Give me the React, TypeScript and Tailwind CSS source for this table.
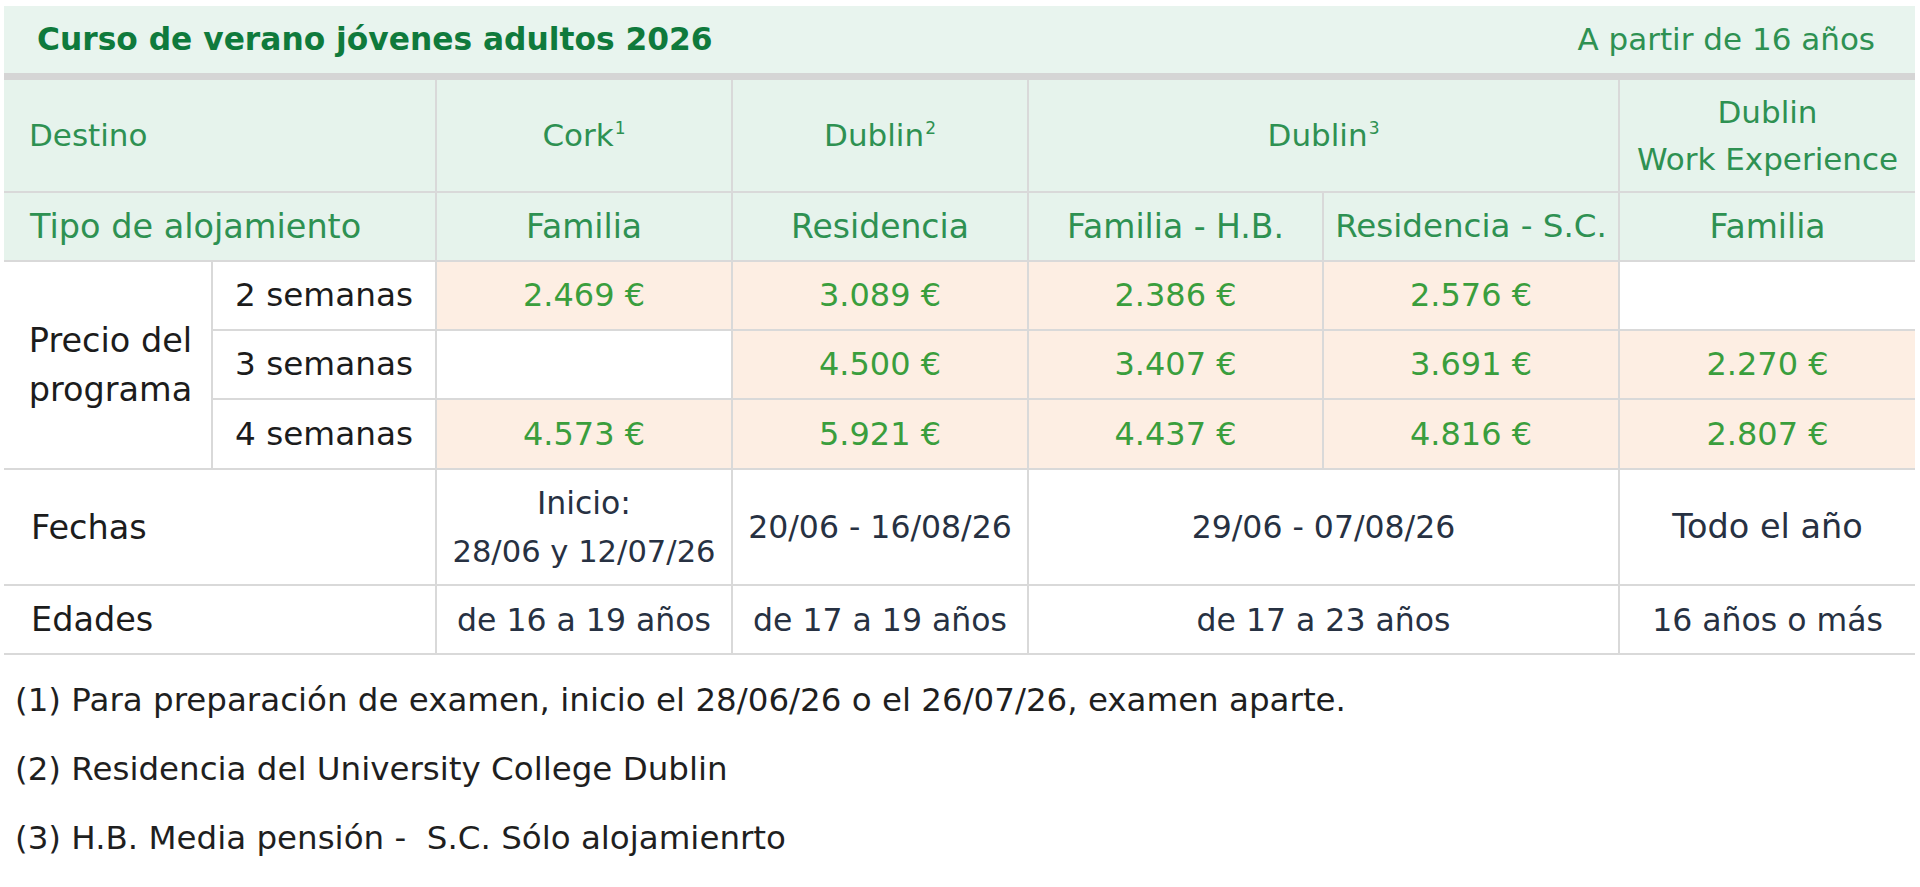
import React from "react";

const FONT = { fontFamily: '"DejaVu Sans", "Open Sans", sans-serif' };

const line = "border-[#d9d9d9]";

function Sup({ n }: { n: string }) {
  return <sup className="text-[17px] top-[-12px] ml-[1px]">{n}</sup>;
}

export default function App() {
  const head = `bg-[#e6f3ec] text-[#2e9152] border-b-2 ${line} flex items-center`;
  const headC = `${head} justify-center text-center border-l-2`;
  const peach = `bg-[#fdeee3] text-[#3a9e3d] text-[32px] border-b-2 border-l-2 ${line} flex items-center justify-center`;
  const white = `bg-white border-b-2 border-l-2 ${line} flex items-center justify-center`;
  const info = `bg-white text-[#273142] text-[31.5px] leading-[48px] border-b-2 border-l-2 ${line} flex items-center justify-center text-center`;
  const label = `bg-white text-[#1c1c1c] text-[33.5px] border-b-2 ${line} flex items-center pl-[27px]`;

  return (
    <div className="min-h-screen bg-white" style={FONT}>
      <div className="ml-[4px] pt-[6px] w-[1911px] text-[31px] leading-[47px]">
        <div className="h-[74px] bg-[#e8f4ee] border-b-[7px] border-[#d5d5d5] flex items-center justify-between pl-[33px] pr-[40px]">
          <span className="font-bold text-[#0f7a3c] text-[31.3px]">Curso de verano jóvenes adultos 2026</span>
          <span className="text-[#2e9152] text-[31px]">A partir de 16 años</span>
        </div>

        <div className="grid grid-cols-[207px_224px_296px_296px_295px_296px_297px] grid-rows-[113px_69px_69px_69px_70px_116px_69px]">
          {/* Destino row */}
          <div className={`${head} col-span-2 pl-[25px]`}>Destino</div>
          <div className={headC}>
            <span>
              Cork
              <Sup n="1" />
            </span>
          </div>
          <div className={headC}>
            <span>
              Dublin
              <Sup n="2" />
            </span>
          </div>
          <div className={`${headC} col-span-2`}>
            <span>
              Dublin
              <Sup n="3" />
            </span>
          </div>
          <div className={headC}>
            <span>
              Dublin
              <br />
              Work Experience
            </span>
          </div>

          {/* Tipo row */}
          <div className={`${head} col-span-2 pl-[26px] text-[33.5px]`}>Tipo de alojamiento</div>
          <div className={`${headC} text-[33px]`}>Familia</div>
          <div className={`${headC} text-[33px]`}>Residencia</div>
          <div className={`${headC} text-[33px]`}>Familia - H.B.</div>
          <div className={`${headC} text-[32.5px]`}>Residencia - S.C.</div>
          <div className={`${headC} text-[33px]`}>Familia</div>

          {/* Prices */}
          <div className={`row-span-3 bg-white text-[#1c1c1c] text-[33.5px] border-b-2 ${line} flex items-center justify-center text-center leading-[49px] pl-[6px]`}>
            <span>
              Precio del
              <br />
              programa
            </span>
          </div>
          <div className={`${white} text-[#1c1c1c] text-[32.7px]`}>2 semanas</div>
          <div className={peach}>2.469 €</div>
          <div className={peach}>3.089 €</div>
          <div className={peach}>2.386 €</div>
          <div className={peach}>2.576 €</div>
          <div className={white}></div>

          <div className={`${white} text-[#1c1c1c] text-[32.7px]`}>3 semanas</div>
          <div className={white}></div>
          <div className={peach}>4.500 €</div>
          <div className={peach}>3.407 €</div>
          <div className={peach}>3.691 €</div>
          <div className={peach}>2.270 €</div>

          <div className={`${white} text-[#1c1c1c] text-[32.7px]`}>4 semanas</div>
          <div className={peach}>4.573 €</div>
          <div className={peach}>5.921 €</div>
          <div className={peach}>4.437 €</div>
          <div className={peach}>4.816 €</div>
          <div className={peach}>2.807 €</div>

          {/* Fechas */}
          <div className={`${label} col-span-2`}>Fechas</div>
          <div className={info}>
            <span>
              Inicio:
              <br />
              <span className="text-[30.6px]">28/06 y 12/07/26</span>
            </span>
          </div>
          <div className={info}>20/06 - 16/08/26</div>
          <div className={`${info} col-span-2`}>29/06 - 07/08/26</div>
          <div className={`${info} text-[33.5px]`}>Todo el año</div>

          {/* Edades */}
          <div className={`${label} col-span-2`}>Edades</div>
          <div className={info}>de 16 a 19 años</div>
          <div className={info}>de 17 a 19 años</div>
          <div className={`${info} col-span-2`}>de 17 a 23 años</div>
          <div className={info}>16 años o más</div>
        </div>
      </div>

      <div className="mt-[11px] pl-[15px] text-[#1f1f1f] text-[32.5px]">
        <p className="h-[69px] flex items-center">(1) Para preparación de examen, inicio el 28/06/26 o el 26/07/26, examen aparte.</p>
        <p className="h-[69px] flex items-center">(2) Residencia del University College Dublin</p>
        <p className="h-[69px] flex items-center">(3) H.B. Media pensión -&nbsp; S.C. Sólo alojamienrto</p>
      </div>
    </div>
  );
}
